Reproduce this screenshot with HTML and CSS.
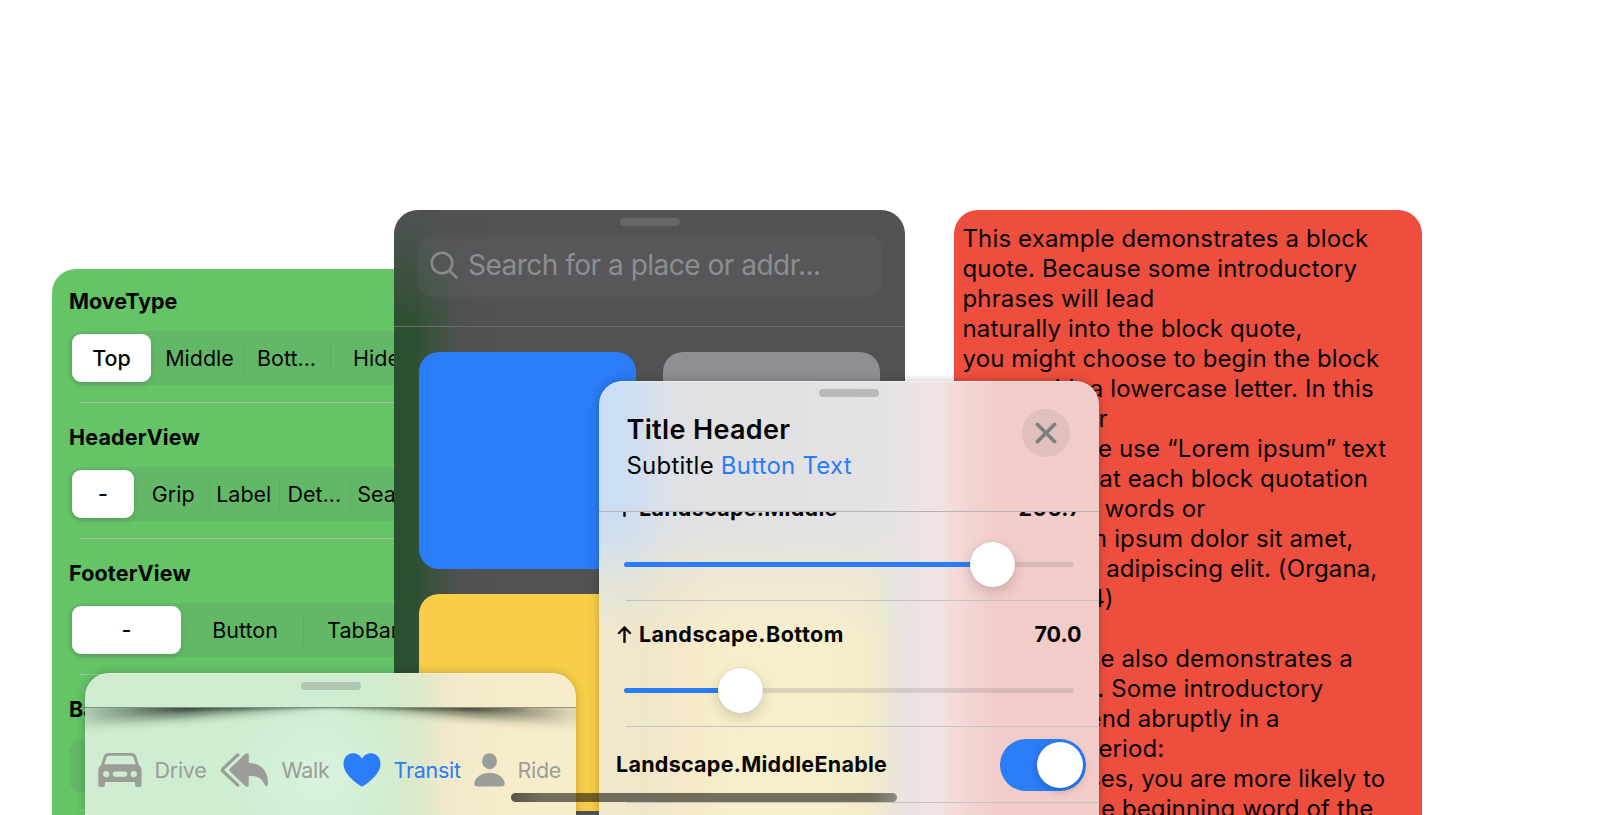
FILE: index.html
```
<!DOCTYPE html>
<html lang="en">
<head>
<meta charset="utf-8">
<title>Floating panels</title>
<link rel="stylesheet" href="styles.css">
</head>
<body>
<main class="desk">

  <section class="panel settings">
    <div class="row">
      <h3 class="row-title">MoveType</h3>
      <div class="seg seg-move">
        <span class="opt on">Top</span><span class="opt">Middle</span><span class="opt div">Bott...</span><span class="opt div">Hide</span>
      </div>
    </div>
    <div class="row">
      <h3 class="row-title wide">HeaderView</h3>
      <div class="seg seg-header">
        <span class="opt on">-</span><span class="opt">Grip</span><span class="opt div">Label</span><span class="opt div">Det...</span><span class="opt div">Sear</span>
      </div>
    </div>
    <div class="row">
      <h3 class="row-title wide">FooterView</h3>
      <div class="seg seg-footer">
        <span class="opt on">-</span><span class="opt">Button</span><span class="opt div">TabBar</span>
      </div>
    </div>
    <div class="row">
      <h3 class="row-title">Backdrop</h3>
      <div class="seg"></div>
    </div>
  </section>

  <section class="panel places">
    <div class="grip"></div>
    <div class="search">
      <svg class="search-icon" width="30" height="30" viewBox="0 0 30 30"><circle cx="12" cy="12" r="10.3"/><path d="M19.8 19.8L26.6 26.6"/></svg>
      <span class="search-text">Search for a place or addr...</span>
    </div>
    <div class="tiles">
      <div class="tile blue"></div>
      <div class="tile gray"></div>
      <div class="tile yellow"></div>
      <div class="tile gray"></div>
    </div>
  </section>

  <section class="panel quote">
    <p class="lines"><span>This example demonstrates a block</span><span>quote. Because some introductory</span><span>phrases will lead</span><span>naturally into the block quote,</span><span>you might choose to begin the block</span><span>quote with a lowercase letter. In this</span><span>and our later</span><span>examples we use “Lorem ipsum” text</span><span>to ensure that each block quotation</span><span>contains 40 words or</span><span>more. Lorem ipsum dolor sit amet,</span><span>consectetur adipiscing elit. (Organa,</span><span>2013, p. 234)</span><span>&nbsp;</span><span>This example also demonstrates a</span><span>block quote. Some introductory</span><span>sentences end abruptly in a</span><span>colon or a period:</span><span class="tight">In those cases, you are more likely to</span><span>capitalize the beginning word of the</span></p>
  </section>

  <section class="panel transit">
    <div class="grip"></div>
    <div class="well">
      <svg class="curl" width="491" height="50" viewBox="0 0 491 50">
        <defs>
          <filter id="soft" x="-10%" y="-100%" width="120%" height="300%"><feGaussianBlur stdDeviation="5.5"/></filter>
          <filter id="fine" x="-10%" y="-100%" width="120%" height="300%"><feGaussianBlur stdDeviation="1.500"/></filter>
        </defs>
        <path d="M-10 -6V17L245 -6L501 17V-6Z" filter="url(#soft)"/>
        <path class="edge" d="M50 -6V3L245 0L440 3V-6Z" filter="url(#fine)"/>
      </svg>
      <nav class="tabs">
        <span class="tab drive"><svg width="44" height="34" viewBox="0 0 44 34"><path fill-rule="evenodd" d="M10.5 0H33.5C36 0 37.6 1.3 38.3 3.5L41 12.2C42.7 13.5 43.6 15.2 43.6 17.5V31.5Q43.6 34 41.2 34H39.4Q37 34 37 31.5V29H7V31.5Q7 34 4.6 34H2.6Q0.3 34 0.3 31.5V17.5C0.3 15.2 1.3 13.5 3 12.2L5.7 3.5C6.4 1.3 8 0 10.5 0ZM11 2.8Q9 2.8 8.4 4.7L6.2 11.3H37.8L35.6 4.7Q35 2.8 33 2.8ZM8.2 18A3.1 3.1 0 1 0 8.2 24.200A3.1 3.1 0 1 0 8.200 18ZM35.8 18A3.1 3.1 0 1 0 35.8 24.2A3.1 3.1 0 1 0 35.8 18ZM17.300 18.500A2.600 2.600 0 0 0 17.300 23.700H26.700A2.600 2.600 0 0 0 26.700 18.500Z"/></svg>Drive</span>
        <span class="tab walk"><svg width="49" height="34" viewBox="0 0 49 34"><path d="M28.700 1.600V10C41 10 48 18.500 48 29.500C48 34.300 45.500 34 44.200 30.900C41.500 24.500 37 23 28.700 23V31.900C28.700 34 26.500 34.300 25.200 33L10.200 18.700Q8.700 17 10.200 15.300L25.200 0.900C26.500-0.300 28.700 0 28.700 1.600Z"/><path class="chev" d="M17.800 1.900L2.900 15.800Q1.800 17 2.900 18.200L17.800 32.100"/></svg>Walk</span>
        <span class="tab heart on"><svg width="38" height="34" viewBox="0 0 38 34"><path d="M19 33.500C18 33.500 17 32.700 15.500 31.600C7 25.200 0.500 18.500 0.500 10.800C0.500 4.500 4.600 0.300 10.200 0.300C14 0.300 17.300 2.500 19 6C20.700 2.500 24 0.300 27.800 0.300C33.400 0.300 37.500 4.500 37.500 10.800C37.500 18.500 31 25.200 22.500 31.600C21 32.700 20 33.500 19 33.500Z"/></svg>Transit</span>
        <span class="tab ride"><svg width="31" height="34" viewBox="0 0 31 34"><ellipse cx="15.500" cy="8.200" rx="7.400" ry="8"/><path d="M3.500 33.500Q0.300 33.500 0.300 30.500C0.300 25.500 6.500 19.700 15.500 19.700S30.700 25.500 30.700 30.500Q30.700 33.500 27.500 33.500Z"/></svg>Ride</span>
      </nav>
    </div>
  </section>

  <section class="panel detail">
    <div class="grip"></div>
    <header class="head">
      <div class="titles">
        <h2 class="title">Title Header</h2>
        <p class="sub">Subtitle <a class="link">Button Text</a></p>
      </div>
      <div class="close"><svg width="22" height="22" viewBox="0 0 22 22"><path d="M2.500 2.500L19.500 19.500M19.500 2.500L2.500 19.500"/></svg></div>
    </header>
    <div class="list">
      <div class="item cut">
        <div class="label-row"><span class="arrow"><svg width="15" height="17" viewBox="0 0 15 17"><path d="M7.500 16V1.500M2 7L7.500 1.500L13 7"/></svg></span><span class="label l-mid">Landscape.Middle</span><span class="value v-mid">206.7</span></div>
        <div class="slider"><div class="fill" style="width:369px"></div><div class="knob"></div></div>
      </div>
      <div class="item">
        <div class="label-row"><span class="arrow"><svg width="15" height="17" viewBox="0 0 15 17"><path d="M7.500 16V1.500M2 7L7.500 1.500L13 7"/></svg></span><span class="label l-bot">Landscape.Bottom</span><span class="value">70.0</span></div>
        <div class="slider"><div class="fill" style="width:117px"></div><div class="knob"></div></div>
      </div>
      <div class="item toggle-row">
        <span class="label l-en">Landscape.MiddleEnable</span>
        <div class="toggle"><div class="toggle-knob"></div></div>
      </div>
    </div>
  </section>

  <div class="home"></div>
</main>
</body>
</html>
```
FILE: styles.css
```
* { box-sizing: border-box; }
body { margin: 0; background: #fff; overflow: hidden; color: #050505; font-family: Inter, "Liberation Sans", sans-serif; }
h2, h3, p { margin: 0; }
.desk { position: relative; width: 1600px; height: 815px; overflow: hidden; }
.panel { position: absolute; overflow: hidden; border-radius: 24px 24px 0 0; }
.grip { width: 60px; height: 8px; border-radius: 4px; margin: 8px auto 0; }

/* settings */
.settings { left: 52px; top: 269px; width: 480px; height: 546px; background: #64c466; }
.row { position: relative; height: 136px; padding: 20.500px 0 0 17px; }
.row:first-child { margin-top: -2px; }
.row::after { content: ""; position: absolute; left: 27px; right: 0; bottom: 0; height: 1px; background: #a3bfa5; }
.row-title { height: 27px; line-height: 27px; font-size: 21.500px; font-weight: 700; letter-spacing: -0.050px; }
.row-title.wide { letter-spacing: 0.160px; }
.seg { display: flex; align-items: stretch; height: 54px; margin-top: 16.500px; padding: 3px; border-radius: 14px; background: #63b868; font-size: 21.500px; }
.opt { display: flex; align-items: center; justify-content: center; position: relative; }
.on.opt { background: #fff; border-radius: 9px; box-shadow: 0 2px 6px rgba(0,0,0,.14); font-weight: 500; }
.opt.div::before { content: ""; position: absolute; left: 0; top: 9px; bottom: 9px; width: 1px; background: #62a868; }
.seg-move .opt { width: 87px; }
.seg-move .opt.on { width: 79px; margin-right: 5px; }
.seg-move .opt:last-child { width: 93px; }
.seg-header .opt { width: 70.500px; }
.seg-header .opt.on { width: 62px; margin-right: 4px; }
.seg-header .opt:last-child { width: 62px; }
.seg-footer .opt { width: 116px; }
.seg-footer .opt.on { width: 109px; margin-right: 6px; }
.seg-footer .opt:last-child { width: 120px; }

/* places */
.places { left: 394px; top: 210px; width: 511px; height: 605px; background: #525254; }
.places::before { content: ""; position: absolute; inset: 0 auto 0 0; width: 120px; background: linear-gradient(90deg, #2b502f 0, #2b502f 18px, rgba(52,82,55,.75) 38px, rgba(74,82,76,.4) 65px, rgba(82,82,84,0) 95px); -webkit-mask-image: linear-gradient(180deg, rgba(0,0,0,.1) 10px, rgba(0,0,0,.4) 50px, #000 120px); mask-image: linear-gradient(180deg, rgba(0,0,0,.1) 10px, rgba(0,0,0,.4) 50px, #000 120px); }
.places > * { position: relative; }
.places .grip { background: #676768; }
.search { display: flex; align-items: center; width: 466px; height: 61px; margin: 10px 0 0 23px; padding: 0 0 3px 13px; border-radius: 15px; background: rgba(120,120,128,.13); color: #8d8d91; font-size: 28px; letter-spacing: -0.500px; }
.search-icon { position: relative; top: 1px; fill: none; stroke: #88888a; stroke-width: 2.600; stroke-linecap: round; margin-right: 8px; }
.tiles { display: grid; grid-template-columns: 217px 217px; gap: 25px 27px; margin-top: 29px; padding: 25px 0 0 25px; border-top: 1px solid #6b6b6c; }
.tile { height: 217px; border-radius: 20px; }
.blue { background: #2a7cf7; }
.gray { background: #8e8e93; }
.yellow { background: #f8cd47; }

/* quote */
.quote { left: 954px; top: 210px; width: 467.500px; height: 605px; background: #ed4e3e; }
.lines { padding: 13.500px 0 0 8.500px; font-size: 24px; line-height: 30px; letter-spacing: 0.130px; white-space: nowrap; }
.lines span { display: block; }
.lines .tight { letter-spacing: 0.070px; }

/* transit */
.transit { left: 85px; top: 673px; width: 491px; height: 142px; background: radial-gradient(circle at 235px 105px, rgba(222,244,228,.7), rgba(222,246,228,0) 90px), linear-gradient(90deg, #cfecd0 0, #ceedd1 240px, #d0ebcd 300px, #dfe8ca 335px, #f4e9ca 370px, #f7edcb 440px, #f7edcb 100%); box-shadow: 0 0 10px rgba(0,0,0,.22), inset 0 1px 0 rgba(255,255,255,.35); }
.transit .grip { margin: 8.500px 0 0 216px; background: #b0c5b2; }
.well { position: relative; margin-top: 17.500px; height: 108px; border-top: 1px solid rgba(60,70,60,.55); overflow: hidden; }
.curl { position: absolute; left: 0; top: 0; fill: rgba(20,30,20,.8); -webkit-mask-image: linear-gradient(90deg, rgba(0,0,0,.2), #000 100px, #000 385px, rgba(0,0,0,.15) 485px); mask-image: linear-gradient(90deg, rgba(0,0,0,.2), #000 100px, #000 385px, rgba(0,0,0,.15) 485px); }
.edge { fill: rgba(20,30,20,.4); }
.tabs { position: relative; display: flex; padding: 45px 0 0 13px; }
.tab { display: flex; align-items: center; height: 34px; font-size: 21.500px; letter-spacing: -0.280px; color: #9a9d98; line-height: 34px; }
.tab svg { fill: #9a9d98; flex: none; margin-right: 12.500px; }
.chev { fill: none; stroke: #9a9d98; stroke-width: 3.200; stroke-linecap: round; }
.drive { width: 122px; }
.walk { width: 123px; }
.heart { width: 131px; }
.tab.on { color: #2a7cf7; }
.tab.on svg { fill: #2a7cf7; }

/* detail */
.detail { left: 599px; top: 381px; width: 500px; height: 434px; background: linear-gradient(90deg, #c9def6 0, #cfdef1 35px, #dce0e6 65px, #e1e1e3 110px, #e2e2e4 255px, #e6e4e4 300px, #f1e4e3 337px, #f3d5d3 368px, #f2ccc8 400px, #f2ccc8 100%); box-shadow: 0 0 10px rgba(0,0,0,.25), inset 0 1px 0 rgba(255,255,255,.4); }
.detail::before { content: ""; position: absolute; inset: 110px 0 0; background: linear-gradient(90deg, #f4e8cb 0, #efe7ca 45px, #f6e9c9 90px, #f7eecb 130px, #f7eecb 230px, #f6ebca 262px, rgba(238,233,205,.85) 285px, rgba(232,228,220,.3) 305px, rgba(236,228,224,0) 325px); -webkit-mask-image: linear-gradient(180deg, transparent 20px, rgba(0,0,0,.2) 55px, rgba(0,0,0,.6) 88px, #000 145px); mask-image: linear-gradient(180deg, transparent 20px, rgba(0,0,0,.2) 55px, rgba(0,0,0,.6) 88px, #000 145px); }
.detail > * { position: relative; }
.detail .grip { background: #b9b9ba; }
.head { display: flex; justify-content: space-between; height: 115px; padding: 12px 29px 0 27.500px; border-bottom: 1px solid #b5b2b4; }
.title { height: 40px; padding-top: 1px; line-height: 40px; font-size: 27px; font-weight: 600; letter-spacing: 0.350px; }
.sub { height: 32px; line-height: 33px; font-size: 24px; letter-spacing: 0.220px; }
.link { color: #2a7cf7; }
.close { display: flex; align-items: center; justify-content: center; width: 48px; height: 48px; border-radius: 50%; background: #e0bfbd; }
.close svg { fill: none; stroke: #7e7e7e; stroke-width: 3.800; stroke-linecap: round; }
.list { height: 303px; overflow: hidden; }
.item { position: relative; height: 126px; }
.item.cut { margin-top: -37px; }
.item::after { content: ""; position: absolute; left: 27px; right: 0; bottom: 0; height: 1px; background: #c6c4c3; }
.label-row { display: flex; align-items: center; height: 30px; padding: 0 17.500px; position: relative; top: 18px; }
.label, .value { font-size: 21.500px; font-weight: 700; }
.l-mid { letter-spacing: 0.280px; }
.l-bot { letter-spacing: 0.450px; }
.l-en { letter-spacing: 0.270px; }
.v-mid { letter-spacing: 0.500px; }
.arrow { display: flex; width: 22.500px; }
.arrow svg { fill: none; stroke: #050505; stroke-width: 2.400; stroke-linecap: round; stroke-linejoin: round; }
.value { margin-left: auto; }
.slider { display: flex; align-items: center; width: 450px; height: 5px; margin: 57px 0 0 25px; border-radius: 3px; background: rgba(120,110,110,.2); }
.fill { height: 5px; flex: none; border-radius: 3px; background: #2a7cf7; }
.knob { width: 45px; height: 45px; flex: none; margin: -1px 0 0 -23px; border-radius: 50%; background: #fff; box-shadow: 0 5px 13px rgba(0,0,0,.16), 0 0 2px rgba(0,0,0,.12); }
.toggle-row { display: flex; align-items: center; justify-content: space-between; height: 76px; padding: 0 13px 0 17px; }
.toggle-row .label { margin-top: -2px; }
.toggle { display: flex; justify-content: flex-end; width: 86px; height: 52px; padding: 3px; border-radius: 26px; background: #2a7cf7; }
.toggle-knob { width: 46px; height: 46px; border-radius: 50%; background: #fff; box-shadow: 0 3px 8px rgba(0,0,0,.2); }

.home { position: absolute; left: 511px; top: 793px; width: 386px; height: 8.500px; border-radius: 5px; background: linear-gradient(90deg, rgba(15,13,5,.68), rgba(15,13,5,.57) 30px, rgba(15,13,5,.57) 360px, rgba(15,13,5,.42)); }
```
